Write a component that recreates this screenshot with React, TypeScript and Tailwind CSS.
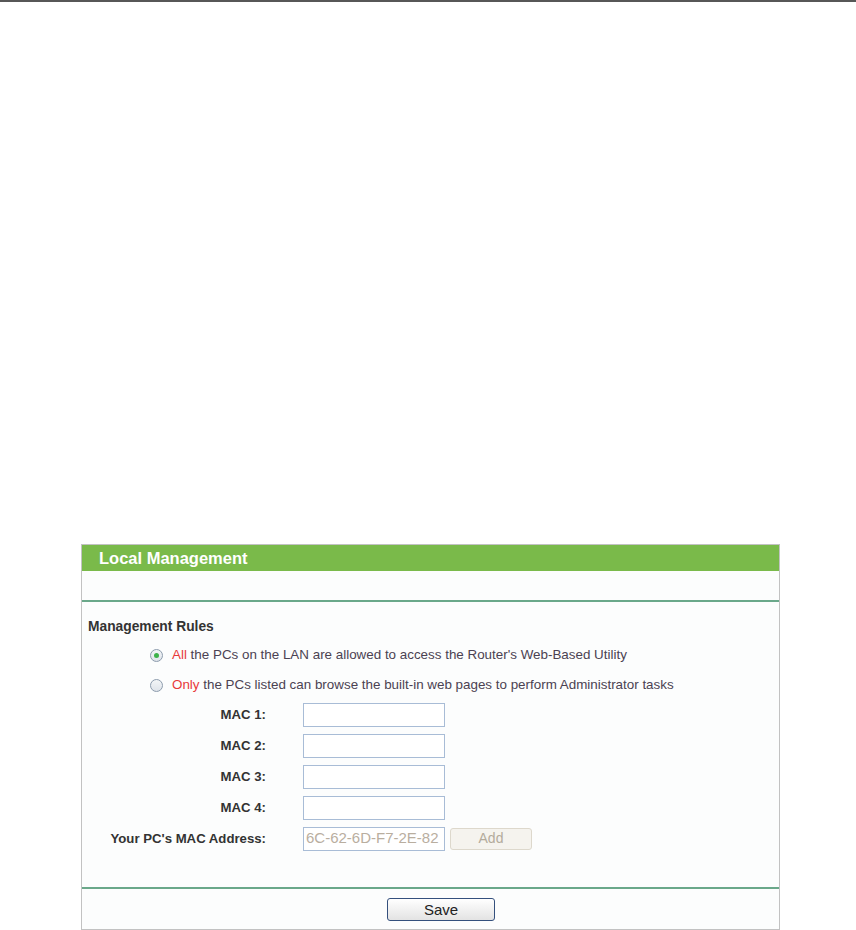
import React from "react";

const Radio = ({ checked }: { checked?: boolean }) => (
  <span className="inline-flex items-center justify-center w-[13px] h-[13px] rounded-full border border-[#8d9cad] bg-gradient-to-b from-[#f3f5f7] to-[#dfe4ea] shrink-0">
    {checked && <span className="w-[5px] h-[5px] rounded-full bg-[#3db24a]" />}
  </span>
);

const MacRow = ({ label, value, disabled }: { label: string; value?: string; disabled?: boolean }) => (
  <div className="flex items-center h-[31px]">
    <div className="w-[184px] text-right font-bold text-[13.2px] text-[#333]">{label}</div>
    <div className="ml-[37px] w-[142px] h-[24px] border border-[#a8bcd6] bg-white flex items-center px-[2px] text-[15px] text-[#b9ae9f] whitespace-nowrap overflow-hidden">
      {value}
    </div>
    {disabled && (
      <div className="ml-[5px] w-[82px] h-[22px] rounded-[3px] border border-[#ddd8cc] bg-[#f5f3ee] flex items-center justify-center text-[14px] text-[#b3ab9c]">
        Add
      </div>
    )}
  </div>
);

export default function App() {
  return (
    <div className="w-[856px] h-[930px] bg-white overflow-hidden" style={{ fontFamily: '"Liberation Sans", Arial, sans-serif' }}>
      <div className="h-[2px] bg-[#575757]" />
      <div className="ml-[81px] mt-[542px] w-[699px] h-[386px] border border-[#c2c2c2] bg-[#fcfdfd] flex flex-col">
        <div className="h-[26px] bg-[#7aba4a] flex items-center pl-[17px]">
          <span className="text-white font-bold text-[16.5px]">Local Management</span>
        </div>
        <div className="h-[29px]" />
        <div className="h-[2px] bg-[#6aa88a]" />
        <div className="flex-1 pt-[15px] pl-[6px]">
          <div className="font-bold text-[13.8px] text-[#333] h-[20px] flex items-center">Management Rules</div>
          <div className="mt-[3px] pl-[62px] text-[13.4px] text-[#4b4252]">
            <div className="flex items-center gap-[9px] h-[30px]">
              <Radio checked />
              <span><span className="text-[#e8393a]">All</span> the PCs on the LAN are allowed to access the Router's Web-Based Utility</span>
            </div>
            <div className="flex items-center gap-[9px] h-[30px]">
              <Radio />
              <span><span className="text-[#e8393a]">Only</span> the PCs listed can browse the built-in web pages to perform Administrator tasks</span>
            </div>
          </div>
          <div className="-ml-[6px] -mt-[1px]">
            <MacRow label="MAC 1:" />
            <MacRow label="MAC 2:" />
            <MacRow label="MAC 3:" />
            <MacRow label="MAC 4:" />
            <MacRow label="Your PC's MAC Address:" value="6C-62-6D-F7-2E-82" disabled />
          </div>
        </div>
        <div className="h-[2px] bg-[#6aa88a]" />
        <div className="h-[40px] flex items-center pl-[305px]">
          <button className="w-[108px] h-[23px] rounded-[3px] border border-[#34507d] bg-gradient-to-b from-white to-[#e3e3e3] text-[15px] text-[#222] leading-none">
            Save
          </button>
        </div>
      </div>
    </div>
  );
}
